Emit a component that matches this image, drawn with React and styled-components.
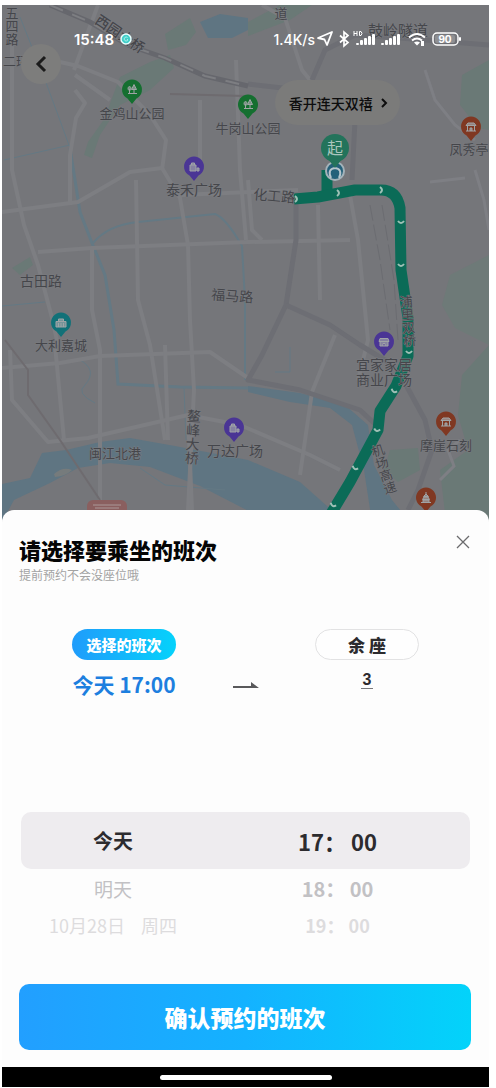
import React from "react";
import styled, { createGlobalStyle } from "styled-components";

const GlobalStyle = createGlobalStyle`
  * { box-sizing: border-box; }
  body { margin: 0; background: #fff; }
  button { font: inherit; color: inherit; border: 0; padding: 0; background: none; cursor: pointer; }
`;

const Phone = styled.main`
  position: relative;
  margin: 5px 7px 1px 2px;
  font-family: "Noto Sans CJK SC", sans-serif;
  color: #2c2b2e;
  overflow: hidden;
`;

const MapSvg = styled.svg`
  display: block;
  width: 100%;
  height: auto;
  background: #75767a;
`;

const Label = styled.text`
  font-family: "Noto Sans CJK SC", sans-serif;
  font-size: ${(p) => p.$size || 13}px;
  font-weight: ${(p) => p.$weight || 400};
  fill: #45464b;
  stroke: #7b7c80;
  stroke-width: 1px;
  paint-order: stroke;
  text-anchor: middle;
  writing-mode: ${(p) => (p.$vertical ? "vertical-rl" : "horizontal-tb")};
`;

const StatusBar = styled.header`
  position: absolute;
  top: 22px;
  left: 0;
  right: 0;
  display: flex;
  align-items: center;
  justify-content: space-between;
  height: 24px;
  padding: 0 28px 0 72px;
  color: #fff;
  font-family: Inter, sans-serif;
  font-weight: 600;
  font-size: 15px;
`;

const StatusGroup = styled.div`
  display: flex;
  align-items: center;
  gap: ${(p) => p.$gap}px;
`;

const Speed = styled.span`
  font-size: 14px;
  font-weight: 500;
`;

const BackButton = styled.button`
  position: absolute;
  top: 39px;
  left: 19px;
  width: 40px;
  height: 40px;
  border-radius: 50%;
  background: #7d7d7c;
  display: grid;
  place-items: center;
`;

const PlaceButton = styled.button`
  position: absolute;
  top: 75px;
  left: 56%;
  height: 45px;
  padding: 0 12px 0 14px;
  border-radius: 23px;
  background: #7b7b7a;
  color: #0d0d0d;
  font-size: 14px;
  line-height: 20px;
  font-weight: 500;
  display: flex;
  align-items: center;
  gap: 8px;
`;

const Sheet = styled.section`
  position: relative;
  margin-top: -12px;
  padding: 22px 18px 17px 17px;
  border-radius: 12px 12px 0 0;
  background: #fdfdfd;
`;

const SheetHead = styled.div`
  display: flex;
  justify-content: space-between;
  align-items: flex-start;
`;

const Title = styled.h1`
  margin: 0;
  font-size: 22px;
  line-height: 34px;
  font-weight: 900;
  color: #050505;
`;

const Subtitle = styled.p`
  margin: 0;
  font-size: 12px;
  line-height: 18px;
  color: #a3a3a3;
`;

const CloseButton = styled.button`
  display: grid;
  place-items: center;
  width: 16px;
  height: 20px;
`;

const Summary = styled.div`
  display: grid;
  grid-template-columns: 104px 1fr 104px;
  padding: 0 52px 0 53px;
  margin-top: 45px;
`;

const SummaryColumn = styled.div`
  display: flex;
  flex-direction: column;
  align-items: center;
`;

const Tag = styled.span`
  width: 100%;
  height: 31px;
  line-height: ${(p) => (p.$filled ? 31 : 29)}px;
  border-radius: 16px;
  text-align: center;
  font-weight: 900;
  font-size: ${(p) => (p.$filled ? 15 : 17)}px;
  color: ${(p) => (p.$filled ? "#fff" : "#2c2b2e")};
  border: ${(p) => (p.$filled ? "0" : "1px solid #e2e2e3")};
  background: ${(p) => (p.$filled ? "linear-gradient(90deg, #209cfb, #05d2fb)" : "#fefefe")};
`;

const Chosen = styled.strong`
  margin-top: 9px;
  font-size: 21px;
  line-height: 30px;
  font-weight: 700;
  color: #1d7fdf;
  white-space: nowrap;
`;

const Seats = styled.strong`
  margin-top: 12px;
  padding: 0 2px;
  min-width: 12px;
  text-align: center;
  border-bottom: 1px solid #77777a;
  font-family: "Liberation Sans", sans-serif;
  font-size: 16px;
  line-height: 16px;
`;

const ArrowCell = styled.div`
  display: flex;
  justify-content: center;
  align-items: flex-end;
  padding-bottom: 10px;
`;

const Picker = styled.div`
  margin: 113px 1px 0 2px;
`;

const PickerRow = styled.div`
  display: grid;
  grid-template-columns: 41% 59%;
  align-items: center;
  height: ${(p) => [57, 40, 32][p.$depth]}px;
  border-radius: 10px;
  background: ${(p) => (p.$depth === 0 ? "#eeecef" : "transparent")};
  color: ${(p) => ["#2c2b2e", "#c2c1c4", "#dddcde"][p.$depth]};
`;

const DayOption = styled.button`
  display: flex;
  justify-content: center;
  gap: 16px;
  white-space: nowrap;
  font-size: ${(p) => [20, 19, 18][p.$depth]}px;
  line-height: 30px;
  font-weight: ${(p) => (p.$depth === 0 ? 700 : 400)};
`;

const TimeOption = styled.button`
  font-size: ${(p) => [22, 20, 18][p.$depth]}px;
  line-height: 30px;
  font-weight: 700;
`;

const ConfirmButton = styled.button`
  display: block;
  width: 100%;
  height: 66px;
  margin-top: 43px;
  border-radius: 10px;
  background: linear-gradient(90deg, #229fff, #14b2ff 50%, #03d3fa);
  color: #fff;
  font-size: 23px;
  font-weight: 900;
`;

const NavBar = styled.footer`
  height: 20px;
  background: #000;
  display: grid;
  place-items: center;
`;

const Handle = styled.div`
  width: 172px;
  height: 5px;
  border-radius: 3px;
  background: #fff;
`;

const pinArt = {
  tree: <path d="M-4 3.500H5M-2.500 3V-1M2 3V-1M-2.500-3.500a1.500 2 0 1 0 .1 0M2-5.500l2.500 5h-5z" />,
  bag: <path d="M-4-2H2V4H-4zM-2.500-2V-4H.5V-2M3 1h2v3H3z" />,
  shop: <path d="M-4-3.500H4L5-.5H-5zM-4 0V4H4V0M-1 4V1.500H1V4" />,
  hotel: <path d="M-5-1.500H5V4H-5zM-2.500-1.500V-4H2.500V-1.500M-2.500 4V0M0 4V0M2.500 4V0" />,
  temple: <path d="M-5-1.500L-3-4H3L5-1.500zM-3.500-1.500V4M3.500-1.500V4M-5 4H5M-1 4V1H1V4" />,
  tower: <path d="M0-6V-3M-2.500-1.500L0-4l2.500 2.500zM-3.500 1.500L-2-1H2l1.500 2.500zM-3 4V2H3V4M-5 4.500H5" />,
};

function Pin({ x, y, color, art }) {
  return (
    <g transform={`translate(${x} ${y})`}>
      <path d="M0 14L-4.500 8.500A10 10 0 1 1 4.500 8.500z" fill={color} />
      <g fill="#a0a4a6" stroke="#a0a4a6" strokeWidth="1" fillOpacity=".7">{pinArt[art]}</g>
    </g>
  );
}

const roads = [
  "M12 45L12 170L24 225L38 265L52 318L58 345",
  "M2 212L78 202L130 172L162 168L180 198L188 245L190 320L194 390L188 510",
  "M38 252L92 248L248 242L350 240",
  "M92 248V310L100 350V510",
  "M136 180L138 300L150 345L165 440",
  "M180 195L298 190",
  "M60 62L78 66L118 82L150 115L166 140L162 170",
  "M75 90L85 103L76 118L70 155V205",
  "M110 100L75 75M98 5L85 40L74 70",
  "M2 368L60 363L100 356L210 352L248 378",
  "M10 350L12 400L48 442L88 438L188 415L240 425L310 455L340 470",
  "M55 345L64 440M165 345L168 440",
  "M200 100V168M236 60L240 170L246 240",
  "M262 5L285 18L302 70L310 80",
  "M350 195L358 240L368 340L358 380",
  "M335 335L312 392L300 475",
  "M188 415L192 510",
  "M248 180L252 230L262 240M318 205L320 300",
];
const darkRoads = [
  "M296 200V240L286 305L262 355L248 380L300 390L360 410L376 425",
  "M286 305L330 325L360 345L388 362",
  "M406 385L425 420L432 450L418 490L408 510",
  "M312 80L325 50L355 35L400 38L489 45",
  "M248 84L300 90L355 120L352 180",
];
const chevrons = [
  [296, 199, 0], [338, 193, 0], [381, 190, 0], [401, 222, 90], [401, 265, 90],
  [409, 352, 90], [394, 391, 115], [377, 430, 100], [355, 468, 115], [333, 505, 115],
];

function CityMap() {
  return (
    <MapSvg viewBox="2 5 487 517" role="img" aria-label="班车路线地图">
      <rect x="2" y="5" width="487" height="517" fill="#75767a" />
      <g fill="#6a7976">
        <path d="M165 34L190 18L196 32L186 45L168 50z" />
        <path d="M120 77L150 62L170 55L174 68L150 90L120 105L100 135L92 158L84 155L88 142L105 118L112 98z" />
        <path d="M12 268L30 257L33 265L20 275z" />
        <path d="M248 22L280 5H312L290 20L248 36z" />
        <path d="M462 75L489 60V130L478 128L460 105z" />
        <path d="M450 275L489 255V345L455 328L442 305z" fill="#6e7a78" />
        <path d="M489 345L462 375L458 415L468 450L440 470L446 522H489z" />
        <path d="M390 450L418 448L420 470L398 482L384 470z" />
      </g>
      <g fill="#5f7582">
        <path d="M2 484L30 478L42 453L66 450L100 442L130 438L175 446L248 460L300 482L345 522H270L200 486L150 467L110 463L78 468L50 483L14 500L2 522z" />
        <path d="M200 22L220 14L248 18V30L232 38H208z" />
        <path d="M248 386L300 393L345 405L368 425L374 465L392 500L410 522H372L364 470L352 425L330 408L290 402L248 392z" />
      </g>
      <path d="M54 474q9-8 18-4q-6 6-17 7z" fill="#767b7c" />
      <g fill="none" stroke="#647984" strokeWidth="2">
        <path d="M20 17L45 80L58 115L70 148" strokeWidth="1" />
        <path d="M70 148L80 212L92 243L105 275L114 330L118 384L180 387L248 388" strokeWidth="3" />
        <path d="M93 243Q108 225 138 222L215 214Q226 218 242 246L245 300V380" />
        <path d="M184 387L186 440M2 306L45 302M4 160L70 145M80 360q18 10 5 25q-10 8 10 18M140 468L165 485L225 490M275 372h15v-25" strokeWidth="1" />
      </g>
      <g fill="none" stroke="#7d7e82" strokeWidth="4" strokeLinejoin="round">
        {roads.map((d) => <path key={d} d={d} />)}
      </g>
      <g fill="none" stroke="#6d6e74" strokeWidth="5" strokeLinejoin="round">
        {darkRoads.map((d) => <path key={d} d={d} />)}
      </g>
      <path d="M370 205L380 260L390 330M382 205L394 280L398 340" fill="none" stroke="#6b6c71" strokeWidth="1" strokeDasharray="16 4" />
      <path d="M50 5L90 22L128 45L165 58L205 76L248 86" fill="none" stroke="#66676d" strokeWidth="5" />
      <path d="M50 5L90 22L128 45L165 58L205 76L248 86" fill="none" stroke="#7d7e82" strokeWidth="2" strokeDasharray="14 10" />
      <path d="M5 340L28 370L28 395L60 440L100 500M170 94L245 96" fill="none" stroke="#6e6b6f" strokeWidth="2" />
      <path d="M475 170L484 200L489 230M430 182L465 178M425 70L435 100L455 125L475 140M440 480l14-14l-6-16l12-10" fill="none" stroke="#7e7f84" strokeWidth="3" />

      <g fill="none" stroke="#0b6b57" strokeWidth="11" strokeLinejoin="round">
        <path d="M327 192V170" />
        <path d="M294 199L318 197L355 190H381Q397 190 400 208L401 270L408 318L408 356L396 386L380 411L378 430L350 482L326 522" />
      </g>
      <g fill="none" stroke="#9fc0b6" strokeWidth="2">
        {chevrons.map(([x, y, r]) => (
          <path key={`${x}-${y}`} d="M-1-3Q3 0-1 3" transform={`translate(${x} ${y}) rotate(${r})`} />
        ))}
      </g>

      <Label x="12" y="26" $vertical>五四路</Label>
      <Label x="16" y="66">二环</Label>
      <Label x="120" y="39" $size="14" $weight="500" transform="rotate(34 120 34)">西园大桥</Label>
      <Label x="281" y="13" $vertical>道</Label>
      <Label x="398" y="36" $size="15">鼓岭隧道</Label>
      <Label x="132" y="118">金鸡山公园</Label>
      <Label x="248" y="133">牛岗山公园</Label>
      <Label x="469" y="154">凤秀亭</Label>
      <Label x="194" y="195" $size="14">泰禾广场</Label>
      <Label x="274" y="201" $size="14" transform="rotate(5 274 199)">化工路</Label>
      <Label x="41" y="286" $size="14">古田路</Label>
      <Label x="232" y="301" $size="14" transform="rotate(4 232 300)">福马路</Label>
      <Label x="61" y="350">大利嘉城</Label>
      <Label x="384" y="370" $size="14">
        宜家家居
        <tspan x="384" dy="15">商业广场</tspan>
      </Label>
      <Label x="408" y="321" $vertical transform="rotate(-5 408 321)">浦里双桥</Label>
      <Label x="115" y="458">闽江北港</Label>
      <Label x="193" y="437" $size="14" $vertical transform="rotate(3 193 437)">鳌峰大桥</Label>
      <Label x="235" y="456" $size="14">万达广场</Label>
      <Label x="446" y="450">摩崖石刻</Label>
      <Label x="384" y="469" $vertical transform="rotate(-18 384 469)">机场高速</Label>

      <Pin x={132} y={90} color="#156f30" art="tree" />
      <Pin x={248} y={105} color="#156f30" art="tree" />
      <Pin x={194} y={167} color="#4a3595" art="bag" />
      <Pin x={61} y={323} color="#127178" art="hotel" />
      <Pin x={384} y={342} color="#4a3595" art="shop" />
      <Pin x={234} y={428} color="#4a3595" art="bag" />
      <Pin x={471} y={127} color="#803822" art="temple" />
      <Pin x={446} y={422} color="#803822" art="temple" />
      <Pin x={426} y={498} color="#803822" art="tower" />

      <rect x="87" y="500" width="40" height="20" rx="6" fill="#8a5f5f" />
      <path d="M93 505h28M95 508h24" stroke="#a99" strokeWidth="1" />
      <circle cx="335" cy="171" r="9" fill="#24617a" stroke="#a4b3ba" strokeWidth="2" />
      <path d="M331 178Q327 169 335 168Q343 169 339 178" fill="none" stroke="#b7c6cd" strokeWidth="2" />
      <path d="M335 168L328 159H342z" fill="#23735b" />
      <circle cx="335" cy="148" r="14" fill="#23735b" />
      <text x="335" y="154" textAnchor="middle" fontSize="16" fill="#abc6bd">起</text>
    </MapSvg>
  );
}

function StatusIcons() {
  const bars = (x) => [0, 1, 2, 3, 4].map((i) => (
    <rect key={x + i} x={x + i * 4} y={13 - i * 2 + (i === 0 ? 1 : 0)} width="3" height={3 + i * 2 - (i === 0 ? 1 : 0)} rx="1" />
  ));
  return (
    <svg width="145" height="20" viewBox="0 0 145 20" fill="#fff" aria-hidden="true">
      <path d="M2 9L16 3L11 16L8.500 10.500z" fill="none" stroke="#fff" strokeWidth="1.800" strokeLinejoin="round" />
      <path d="M24 6.500L32 13.500L28 17V3L32 6.500L24 13.500" fill="none" stroke="#fff" strokeWidth="1.700" />
      <path d="M38 2V7M41 2V7M38 4.500H41M43.500 2.500V6.500H45Q47 4.500 45 2.500z" fill="none" stroke="#fff" strokeWidth="1" />
      {bars(40)}
      {bars(65)}
      <g fill="none" stroke="#fff" strokeWidth="2">
        <path d="M93 8.500Q101 1.500 109 8.500" />
        <path d="M96 11.500Q101 7.500 106 11.500" />
      </g>
      <path d="M98 13.500Q101 11.500 104 13.500L101 16.500zM105 12h3v5h-3z" />
      <rect x="117" y="4" width="25" height="12" rx="4" fill="none" stroke="#fff" strokeWidth="1.500" />
      <rect x="119" y="6" width="20" height="8" rx="2" fill="#8f9093" />
      <rect x="143" y="8" width="2" height="4" rx="1" />
      <text x="129" y="14" textAnchor="middle" fontSize="10" fontWeight="700">90</text>
    </svg>
  );
}

const options = [
  { day: ["今天"], time: "17： 00" },
  { day: ["明天"], time: "18： 00" },
  { day: ["10月28日", "周四"], time: "19： 00" },
];

export default function App() {
  return (
    <>
      <GlobalStyle />
      <Phone>
        <CityMap />
        <StatusBar>
          <StatusGroup $gap={6}>
            <span>15:48</span>
            <svg width="12" height="12" viewBox="0 0 12 12" aria-hidden="true">
              <circle cx="6" cy="6" r="5" fill="#42cfc9" stroke="#e8ffff" strokeWidth="1.500" />
              <path d="M7.500 4.500A2 2 0 1 0 7.500 7.500V6" fill="none" stroke="#a9f1ea" />
            </svg>
          </StatusGroup>
          <StatusGroup $gap={1}>
            <Speed>1.4K/s</Speed>
            <StatusIcons />
          </StatusGroup>
        </StatusBar>
        <BackButton aria-label="返回">
          <svg width="12" height="18" viewBox="0 0 12 18" fill="none" stroke="#1b1b1b" strokeWidth="3">
            <path d="M10 2L3 9L10 16" />
          </svg>
        </BackButton>
        <PlaceButton>
          香开连天双禧
          <svg width="7" height="10" viewBox="0 0 7 10" fill="none" stroke="#0d0d0d" strokeWidth="2" aria-hidden="true">
            <path d="M1 1L5 5L1 9" />
          </svg>
        </PlaceButton>
        <Sheet>
          <SheetHead>
            <div>
              <Title>请选择要乘坐的班次</Title>
              <Subtitle>提前预约不会没座位哦</Subtitle>
            </div>
            <CloseButton aria-label="关闭">
              <svg width="14" height="14" viewBox="0 0 14 14" stroke="#6b6b6d" strokeWidth="1.300">
                <path d="M1 1L13 13M13 1L1 13" />
              </svg>
            </CloseButton>
          </SheetHead>
          <Summary>
            <SummaryColumn>
              <Tag $filled>选择的班次</Tag>
              <Chosen>今天 17:00</Chosen>
            </SummaryColumn>
            <ArrowCell>
              <svg width="26" height="8" viewBox="0 0 26 8" aria-hidden="true">
                <path d="M0 5H18V1L26 7H0z" fill="#59595b" />
              </svg>
            </ArrowCell>
            <SummaryColumn>
              <Tag>余 座</Tag>
              <Seats>3</Seats>
            </SummaryColumn>
          </Summary>
          <Picker>
            {options.map(({ day, time }, depth) => (
              <PickerRow key={time} $depth={depth}>
                <DayOption $depth={depth}>
                  {day.map((part) => <span key={part}>{part}</span>)}
                </DayOption>
                <TimeOption $depth={depth}>{time}</TimeOption>
              </PickerRow>
            ))}
          </Picker>
          <ConfirmButton>确认预约的班次</ConfirmButton>
        </Sheet>
        <NavBar><Handle /></NavBar>
      </Phone>
    </>
  );
}
